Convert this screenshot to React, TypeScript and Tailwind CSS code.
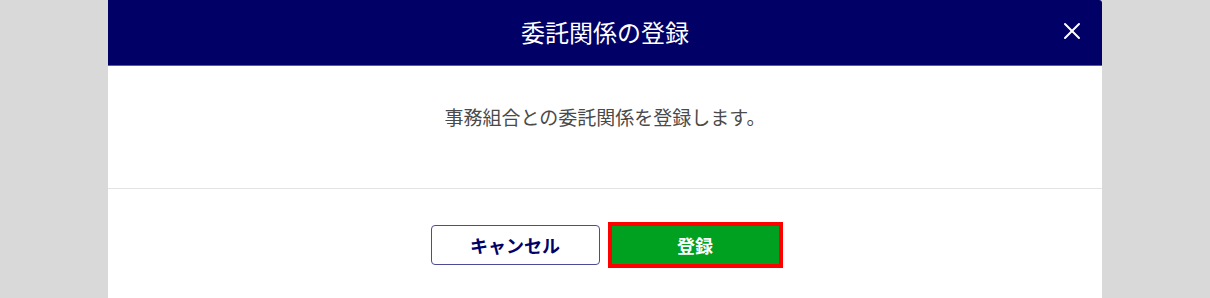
import { X } from 'lucide-react';

const font = { fontFamily: '"Noto Sans CJK JP", "Noto Sans", sans-serif' };

const App = () => {
  return (
    <div className="min-h-[298px] w-full bg-[#d9d9d9] overflow-hidden" style={font}>
      <div className="mx-auto w-[994px] h-[298px] bg-white rounded-tr-[3px]">
        {/* Header */}
        <div className="relative flex h-[66px] items-center justify-center bg-[#000066] border-b border-[#5a5a9c] rounded-tr-[3px]">
          <h2 className="text-[24px] leading-none text-white -mt-[2px]">委託関係の登録</h2>
          <button className="absolute right-[16px] top-[17px] text-white" aria-label="close">
            <X size={28} strokeWidth={1.7} />
          </button>
        </div>

        {/* Body */}
        <div className="h-[122px] pt-[37px] text-center">
          <p className="text-[19px] leading-[28px] text-[#4a4a4a]">事務組合との委託関係を登録します。</p>
        </div>

        <div className="h-px bg-[#e3e3e3]" />

        {/* Footer */}
        <div className="flex justify-center gap-[11px] pt-[36px]">
          <button className="flex h-[40px] w-[169px] items-center justify-center rounded-[4px] border border-[#4b4b96] bg-white text-[18px] font-bold text-[#000066]">
            キャンセル
          </button>
          <button className="flex h-[40px] w-[169px] items-center justify-center bg-[#00a020] text-[18px] font-bold text-white outline-4 outline-[#ff0000] -outline-offset-1">
            登録
          </button>
        </div>
      </div>
    </div>
  );
};

export default App;
